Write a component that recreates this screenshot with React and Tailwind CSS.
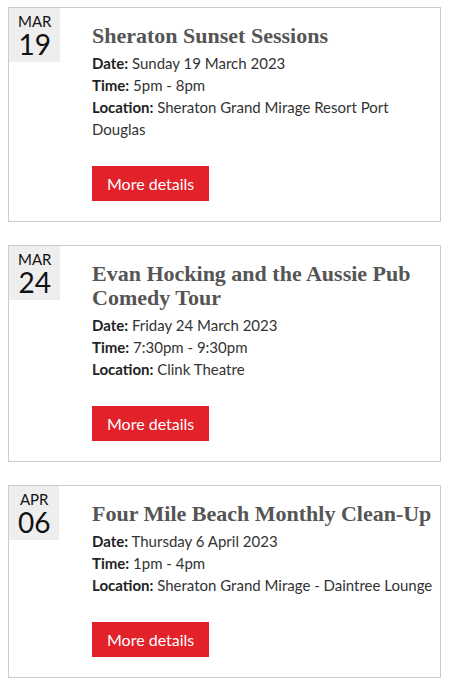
import React from 'react';

const events = [
  {
    month: 'MAR',
    day: '19',
    title: 'Sheraton Sunset Sessions',
    date: 'Sunday 19 March 2023',
    time: '5pm - 8pm',
    location: 'Sheraton Grand Mirage Resort Port Douglas',
  },
  {
    month: 'MAR',
    day: '24',
    title: 'Evan Hocking and the Aussie Pub Comedy Tour',
    date: 'Friday 24 March 2023',
    time: '7:30pm - 9:30pm',
    location: 'Clink Theatre',
  },
  {
    month: 'APR',
    day: '06',
    title: 'Four Mile Beach Monthly Clean-Up',
    date: 'Thursday 6 April 2023',
    time: '1pm - 4pm',
    location: 'Sheraton Grand Mirage - Daintree Lounge',
  },
];

function EventCard({ ev }) {
  return (
    <div className="flex border border-[#cccccc] bg-white">
      {/* Date badge column */}
      <div className="w-[83px] shrink-0">
        <div className="inline-flex flex-col items-center bg-[#eeeeee] px-[9px] pt-[5px] pb-[4px] text-[#111111]">
          <span className="text-[15px] leading-[17px]">{ev.month}</span>
          <span className="text-[28px] leading-[28px]">{ev.day}</span>
        </div>
      </div>

      {/* Details */}
      <div className="flex-1 pt-4 pb-5">
        <h2
          className="text-[22px] leading-6 font-bold text-[#555555]"
          style={{ fontFamily: '"Liberation Serif", serif' }}
        >
          {ev.title}
        </h2>
        <div className="mt-1 text-[15px] leading-[22px] text-[#333333]">
          <p><span className="font-bold text-[#222222]">Date:</span> {ev.date}</p>
          <p><span className="font-bold text-[#222222]">Time:</span> {ev.time}</p>
          <p><span className="font-bold text-[#222222]">Location:</span> {ev.location}</p>
        </div>
        <button className="mt-[26px] h-[35px] px-[15px] bg-[#e2212a] text-white text-[16px]">
          More details
        </button>
      </div>
    </div>
  );
}

export default function App() {
  return (
    <div
      className="min-h-screen bg-white pt-[7px] pl-2 pr-[9px]"
      style={{ fontFamily: 'Lato, "Liberation Sans", sans-serif' }}
    >
      <div className="flex flex-col gap-[23px]">
        {events.map((ev, i) => (
          <EventCard key={i} ev={ev} />
        ))}
      </div>
    </div>
  );
}
